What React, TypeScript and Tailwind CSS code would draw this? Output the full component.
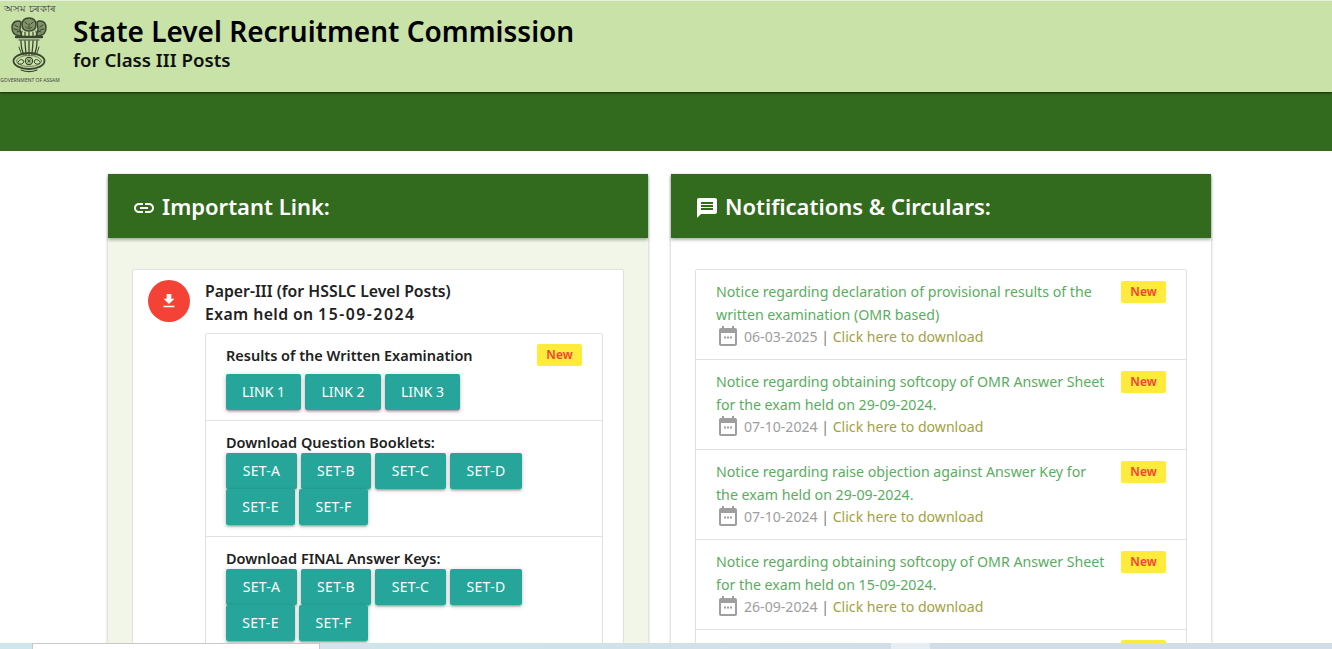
import React from "react";

const GREEN = "bg-[#336b1e]";

function Emblem() {
  return (
    <svg width="38" height="56" viewBox="0 0 38 56" className="block blur-[0.3px]">
      <g fill="none" stroke="#3a4630" strokeLinecap="round">
        <path d="M19 1c-5 0-7 3-7 7 0 3 2 6 7 6s7-3 7-6c0-4-2-7-7-7z" strokeWidth="1.4" fill="#7f9268" />
        <path d="M8 4c-4 0-6 3-6 7s2 7 7 8h3c-1-2-2-4-2-6 0-3 1-6 1-8-1-1-2-1-3-1z" strokeWidth="1.4" fill="#7f9268" />
        <path d="M30 4c4 0 6 3 6 7s-2 7-7 8h-3c1-2 2-4 2-6 0-3-1-6-1-8 1-1 2-1 3-1z" strokeWidth="1.4" fill="#7f9268" />
        <path d="M15 5l2 2M23 5l-2 2M16 10c2 2 4 2 6 0M19 7v3M5 8l3 2M4 12l4 1M33 8l-3 2M34 12l-4 1M7 15l3-1M31 15l-3-1" strokeWidth="1" />
        <path d="M12 14l-1 5M26 14l1 5M15 15v4M19 15v4M23 15v4" strokeWidth="1.2" />
        <path d="M6 20h26" strokeWidth="2.4" />
        <path d="M9 23h20" strokeWidth="1" />
        <path d="M11 24c0 5 1 10 3 14M15 24c0 5 1 10 1 14M19 24v14M23 24c0 5-1 10-1 14M27 24c0 5-1 10-3 14" strokeWidth="1.3" />
        <path d="M9 30c1 3 2 6 3 8M29 30c-1 3-2 6-3 8" strokeWidth="1" />
        <ellipse cx="19" cy="44" rx="15.5" ry="8" strokeWidth="1.8" />
        <ellipse cx="19" cy="44" rx="12.5" ry="5.5" strokeWidth="0.6" />
        <circle cx="19" cy="44" r="3.6" strokeWidth="1.1" />
        <circle cx="19" cy="44" r="1" fill="#3a4630" stroke="none" />
        <path d="M19 40.400v7.200M15.400 44h7.200M16.500 41.500l5 5M21.500 41.500l-5 5" strokeWidth="0.5" />
        <path d="M8 45c1-2 3-3 5-2l1 2-2 2-3 0zM30 45c-1-2-3-3-5-2l-1 2 2 2 3 0z" strokeWidth="1" />
        <path d="M11 53c5 2 11 2 16 0" strokeWidth="1.2" />
      </g>
    </svg>
  );
}

function LinkIcon() {
  return (
    <svg width="24" height="24" viewBox="0 0 24 24" fill="#fff" className="mt-[3px]">
      <path d="M3.9 12c0-1.71 1.39-3.1 3.1-3.1h4V7H7c-2.76 0-5 2.240-5 5s2.240 5 5 5h4v-1.900H7c-1.710 0-3.100-1.390-3.100-3.100zM8 13h8v-2H8v2zm9-6h-4v1.900h4c1.710 0 3.100 1.390 3.100 3.100s-1.390 3.100-3.100 3.100h-4V17h4c2.760 0 5-2.240 5-5s-2.240-5-5-5z" />
    </svg>
  );
}

function MessageIcon() {
  return (
    <svg width="24" height="24" viewBox="0 0 24 24" fill="#fff" className="mt-[3px]">
      <path d="M20 2H4c-1.100 0-1.990.900-1.990 2L2 22l4-4h14c1.100 0 2-.900 2-2V4c0-1.100-.900-2-2-2zm-2 12H6v-2h12v2zm0-3H6V9h12v2zm0-3H6V6h12v2z" />
    </svg>
  );
}

function DownloadIcon() {
  return (
    <svg width="14" height="14" viewBox="5 3 14 18" fill="#fff">
      <path d="M19 9h-4V3H9v6H5l7 7 7-7zM5 18v2h14v-2H5z" />
    </svg>
  );
}

function CalendarIcon() {
  return (
    <svg width="24" height="24" viewBox="0 0 24 24" fill="#9e9e9e" className="shrink-0">
      <path d="M19 4h-1V2h-2v2H8V2H6v2H5c-1.100 0-2 .900-2 2v14c0 1.100.900 2 2 2h14c1.100 0 2-.900 2-2V6c0-1.100-.900-2-2-2zm0 16H5V9h14v11z" />
      <path d="M8 12.500h2v2H8zM11 12.500h2v2h-2zM14 12.500h2v2h-2z" />
    </svg>
  );
}

function NewBadge({ children = "New" }: { children?: React.ReactNode }) {
  return (
    <span className="flex h-[22px] w-[45px] shrink-0 items-center justify-center rounded-[2px] bg-[#ffeb3b] text-[12px] font-semibold text-[#f44336]">
      {children}
    </span>
  );
}

function Btn({ label, width }: { label: string; width: string }) {
  return (
    <a className={`flex h-9 items-center justify-center rounded-[2px] bg-[#26a69a] pb-[2px] text-[14px] text-white shadow-[0_2px_2px_0_rgba(0,0,0,0.14),0_3px_1px_-2px_rgba(0,0,0,0.12),0_1px_5px_0_rgba(0,0,0,0.2)] ${width}`}>
      {label}
    </a>
  );
}

function SetRow({ title }: { title: string }) {
  return (
    <div className="border-t border-[#e0e0e0] pb-[11px] pl-5 pr-5 pt-[10px]">
      <div className="text-[14.5px] font-semibold leading-[22px] text-[#212121]">{title}</div>
      <div className="flex w-[320px] flex-wrap gap-x-1">
        <Btn label="SET-A" width="w-[71px] tracking-[0.3px]" />
        <Btn label="SET-B" width="w-[70px] tracking-[0.3px]" />
        <Btn label="SET-C" width="w-[71px] tracking-[0.3px]" />
        <Btn label="SET-D" width="w-[72px] tracking-[0.3px]" />
        <Btn label="SET-E" width="w-[69px] tracking-[0.3px]" />
        <Btn label="SET-F" width="w-[69px] tracking-[0.3px]" />
      </div>
    </div>
  );
}

const notices = [
  ["Notice regarding declaration of provisional results of the written examination (OMR based)", "06-03-2025"],
  ["Notice regarding obtaining softcopy of OMR Answer Sheet for the exam held on 29-09-2024.", "07-10-2024"],
  ["Notice regarding raise objection against Answer Key for the exam held on 29-09-2024.", "07-10-2024"],
  ["Notice regarding obtaining softcopy of OMR Answer Sheet for the exam held on 15-09-2024.", "26-09-2024"],
];

function Notice({ text, date }: { text: string; date: string }) {
  return (
    <div className="flex h-[90px] justify-between border-b border-[#e0e0e0] pl-5 pr-5 pt-[10px]">
      <div className="w-[394px]">
        <p className="w-[390px] text-[14.2px] leading-[23px] text-[#5aad60]">{text}</p>
        <div className="-mt-[2px] flex items-center gap-1 text-[14.1px] leading-[21px] text-[#9e9e9e]">
          <CalendarIcon />
          <span>
            {date} <span className="text-[#757575]">|</span> <a className="text-[#a3a23f]">Click here to download</a>
          </span>
        </div>
      </div>
      <div className="mt-[1px]">
        <NewBadge />
      </div>
    </div>
  );
}

export default function App() {
  return (
    <div className="relative h-screen overflow-hidden bg-white font-['Noto_Sans',sans-serif]">
      <header className="relative z-10 flex h-[92px] items-start border-t border-[#e6f0d8] bg-[#c8e2a8] shadow-[0_1px_2px_rgba(0,0,0,0.6)]">
        <div className="flex w-[60px] shrink-0 flex-col items-center pt-[1px]">
          <span className="text-[10px] leading-[12px] text-[#444]">অসম চৰকাৰ</span>
          <div className="-ml-[3px] mt-[3px]">
            <Emblem />
          </div>
          <span className="mt-[4px] whitespace-nowrap text-[5px] leading-[6px] text-[#444]">GOVERNMENT OF ASSAM</span>
        </div>
        <div className="ml-[13px] pt-[12px]">
          <div className="text-[28px] font-semibold leading-[36px] text-black">State Level Recruitment Commission</div>
          <div className="text-[18.7px] font-semibold leading-[22px] text-[#111]">for Class III Posts</div>
        </div>
      </header>
      <nav className={`h-[59px] ${GREEN}`} />
      <main className="flex gap-[23px] pl-[108px] pt-[23px]">
        <section className="h-[600px] w-[540px] bg-[#f1f6e9] shadow-[0_1px_3px_rgba(0,0,0,0.3)]">
          <div className={`flex h-16 items-center gap-[6px] pl-6 ${GREEN} shadow-[0_2px_3px_rgba(0,0,0,0.3)]`}>
            <LinkIcon />
            <h2 className="text-[22px] font-semibold text-white">Important Link:</h2>
          </div>
          <div className="ml-6 mt-[31px] flex h-[500px] w-[492px] gap-[15px] rounded-[2px] border border-[#e0e0e0] bg-white pl-[15px] pt-[10px]">
            <div className="flex h-[42px] w-[42px] shrink-0 items-center justify-center rounded-full bg-[#f44336]">
              <DownloadIcon />
            </div>
            <div className="w-[398px]">
              <div className="text-[15.8px] font-semibold leading-[23px] text-[#212121]">
                <div>Paper-III (for HSSLC Level Posts)</div>
                <div>
                  <span className="tracking-[0.4px]">Exam held on </span>
                  <span className="tracking-[1.5px]">15-09-2024</span>
                </div>
              </div>
              <div className="mt-[7px] rounded-[2px] border border-[#e0e0e0]">
                <div className="h-[86px] pl-5 pr-5 pt-[10px]">
                  <div className="flex items-center justify-between">
                    <span className="text-[14.5px] font-semibold leading-[22px] text-[#212121]">Results of the Written Examination</span>
                    <NewBadge />
                  </div>
                  <div className="mt-[8px] flex gap-x-1">
                    <Btn label="LINK 1" width="w-[75px]" />
                    <Btn label="LINK 2" width="w-[76px]" />
                    <Btn label="LINK 3" width="w-[75px]" />
                  </div>
                </div>
                <SetRow title="Download Question Booklets:" />
                <SetRow title="Download FINAL Answer Keys:" />
              </div>
            </div>
          </div>
        </section>
        <section className="h-[600px] w-[540px] bg-white shadow-[0_1px_3px_rgba(0,0,0,0.3)]">
          <div className={`flex h-16 items-center gap-[6px] pl-6 ${GREEN} shadow-[0_2px_3px_rgba(0,0,0,0.3)]`}>
            <MessageIcon />
            <h2 className="text-[22px] font-semibold text-white">Notifications &amp; Circulars:</h2>
          </div>
          <div className="ml-6 mt-[31px] w-[492px] rounded-[2px] border border-[#e0e0e0] bg-white">
            {notices.map(([t, d]) => (
              <Notice key={t} text={t} date={d} />
            ))}
            <div className="flex h-[90px] justify-end pr-5 pt-[10px]">
              <NewBadge>{""}</NewBadge>
            </div>
          </div>
        </section>
      </main>
      <div className="absolute inset-x-0 bottom-0 h-[6px] bg-gradient-to-r from-[#cfe6ea] from-[25%] to-[#d3dde8] to-[70%]">
        <div className="absolute bottom-0 left-[32px] h-[6px] w-[288px] border-l border-r border-t border-[#c8c8c8] bg-white" />
        <div className="absolute bottom-0 left-[891px] h-[6px] w-[39px] bg-[#e6eef4]" />
      </div>
    </div>
  );
}
